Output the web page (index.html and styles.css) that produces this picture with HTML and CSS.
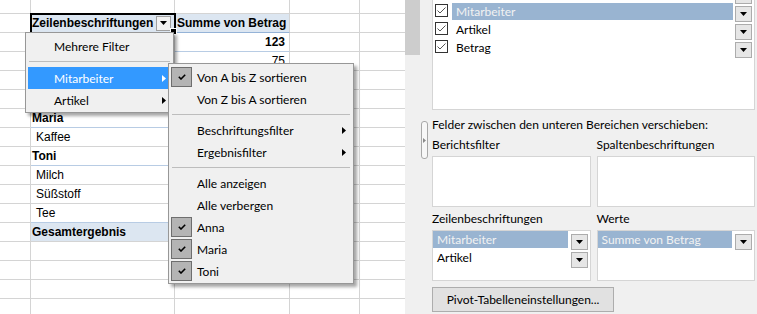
FILE: index.html
```html
<!DOCTYPE html>
<html lang="de">
<head>
    <meta charset="UTF-8">
    <title>PivotTable Filter</title>
    <link rel="stylesheet" href="styles.css">
</head>
<body>
<div class="screen">
    <div class="sheet">
        <div class="row top"><div class="c ca"></div><div class="c cb"></div><div class="c cc"></div><div class="c cd"></div><div class="c ce"></div></div>
        <div class="row">
            <div class="c ca"></div>
            <div class="c cb head sel">Zeilenbeschriftungen
                <span class="dd"><svg width="7" height="4" viewBox="0 0 7 4"><path d="M0 0H7L3.5 4z"/></svg></span>
            </div>
            <div class="c cc head left">Summe von Betrag</div>
            <div class="c cd"></div><div class="c ce"></div>
        </div>
        <!-- rows under the open menus stay empty -->
        <div class="row"><div class="c ca"></div><div class="c cb grp"></div><div class="c cc b grp">123</div><div class="c cd"></div><div class="c ce"></div></div>
        <div class="row"><div class="c ca"></div><div class="c cb"></div><div class="c cc">75</div><div class="c cd"></div><div class="c ce"></div></div>
        <div class="row"><div class="c ca"></div><div class="c cb"></div><div class="c cc"></div><div class="c cd"></div><div class="c ce"></div></div>
        <div class="row"><div class="c ca"></div><div class="c cb"></div><div class="c cc"></div><div class="c cd"></div><div class="c ce"></div></div>
        <div class="row"><div class="c ca"></div><div class="c cb b grp">Maria</div><div class="c cc grp"></div><div class="c cd"></div><div class="c ce"></div></div>
        <div class="row"><div class="c ca"></div><div class="c cb ind">Kaffee</div><div class="c cc"></div><div class="c cd"></div><div class="c ce"></div></div>
        <div class="row"><div class="c ca"></div><div class="c cb b grp">Toni</div><div class="c cc grp"></div><div class="c cd"></div><div class="c ce"></div></div>
        <div class="row"><div class="c ca"></div><div class="c cb ind">Milch</div><div class="c cc"></div><div class="c cd"></div><div class="c ce"></div></div>
        <div class="row"><div class="c ca"></div><div class="c cb ind">Süßstoff</div><div class="c cc"></div><div class="c cd"></div><div class="c ce"></div></div>
        <div class="row"><div class="c ca"></div><div class="c cb ind last">Tee</div><div class="c cc last"></div><div class="c cd"></div><div class="c ce"></div></div>
        <div class="row"><div class="c ca"></div><div class="c cb total">Gesamtergebnis</div><div class="c cc total"></div><div class="c cd"></div><div class="c ce"></div></div>
        <div class="row"><div class="c ca"></div><div class="c cb"></div><div class="c cc"></div><div class="c cd"></div><div class="c ce"></div></div>
        <div class="row"><div class="c ca"></div><div class="c cb"></div><div class="c cc"></div><div class="c cd"></div><div class="c ce"></div></div>
        <div class="row"><div class="c ca"></div><div class="c cb"></div><div class="c cc"></div><div class="c cd"></div><div class="c ce"></div></div>
        <div class="row"><div class="c ca"></div><div class="c cb"></div><div class="c cc"></div><div class="c cd"></div><div class="c ce"></div></div>

        <!-- field dropdown -->
        <div class="menu filter-menu">
            <div class="mi"><span class="gut"></span>Mehrere Filter</div>
            <div class="sep"></div>
            <div class="mi active"><span class="gut"></span>Mitarbeiter
                <svg class="arr" width="4" height="7" viewBox="0 0 4 7"><path d="M0 0L4 3.5L0 7z"/></svg></div>
            <div class="mi"><span class="gut"></span>Artikel
                <svg class="arr" width="4" height="7" viewBox="0 0 4 7"><path d="M0 0L4 3.5L0 7z"/></svg></div>
        </div>

        <!-- Mitarbeiter submenu -->
        <div class="menu sub-menu">
            <div class="mi"><span class="gut"><span class="chk"><svg width="8" height="6" viewBox="0 0 8 6"><path d="M0.8 2.8L3 5L7.2 0.8"/></svg></span></span>Von A bis Z sortieren</div>
            <div class="mi"><span class="gut"></span>Von Z bis A sortieren</div>
            <div class="sep"></div>
            <div class="mi"><span class="gut"></span>Beschriftungsfilter
                <svg class="arr" width="4" height="7" viewBox="0 0 4 7"><path d="M0 0L4 3.5L0 7z"/></svg></div>
            <div class="mi"><span class="gut"></span>Ergebnisfilter
                <svg class="arr" width="4" height="7" viewBox="0 0 4 7"><path d="M0 0L4 3.5L0 7z"/></svg></div>
            <div class="sep"></div>
            <div class="mi"><span class="gut"></span>Alle anzeigen</div>
            <div class="mi"><span class="gut"></span>Alle verbergen</div>
            <div class="mi"><span class="gut"><span class="chk"><svg width="8" height="6" viewBox="0 0 8 6"><path d="M0.8 2.8L3 5L7.2 0.8"/></svg></span></span>Anna</div>
            <div class="mi"><span class="gut"><span class="chk"><svg width="8" height="6" viewBox="0 0 8 6"><path d="M0.8 2.8L3 5L7.2 0.8"/></svg></span></span>Maria</div>
            <div class="mi"><span class="gut"><span class="chk"><svg width="8" height="6" viewBox="0 0 8 6"><path d="M0.8 2.8L3 5L7.2 0.8"/></svg></span></span>Toni</div>
        </div>
    </div>

    <div class="vscroll"><div class="thumb"></div></div>

    <div class="panel">
        <div class="handle-col">
            <div class="handle"><svg width="3" height="5" viewBox="0 0 3 5"><path d="M0 0L3 2.5L0 5z"/></svg></div>
        </div>
        <div class="panel-main">
            <div class="field-list">
                <div class="fl-row">
                    <span class="cbx"></span><span class="fl-name"></span>
                    <span class="btn"><svg width="7" height="4" viewBox="0 0 7 4"><path d="M0 0H7L3.5 4z"/></svg></span>
                </div>
                <div class="fl-row">
                    <span class="cbx"><svg width="11" height="11" viewBox="0 0 11 11"><path d="M1.5 5.5L4 8L9.5 2.5"/></svg></span>
                    <span class="fl-name hl">Mitarbeiter</span>
                    <span class="btn"><svg width="7" height="4" viewBox="0 0 7 4"><path d="M0 0H7L3.5 4z"/></svg></span>
                </div>
                <div class="fl-row">
                    <span class="cbx"><svg width="11" height="11" viewBox="0 0 11 11"><path d="M1.5 5.5L4 8L9.5 2.5"/></svg></span>
                    <span class="fl-name">Artikel</span>
                    <span class="btn"><svg width="7" height="4" viewBox="0 0 7 4"><path d="M0 0H7L3.5 4z"/></svg></span>
                </div>
                <div class="fl-row">
                    <span class="cbx"><svg width="11" height="11" viewBox="0 0 11 11"><path d="M1.5 5.5L4 8L9.5 2.5"/></svg></span>
                    <span class="fl-name">Betrag</span>
                    <span class="btn"><svg width="7" height="4" viewBox="0 0 7 4"><path d="M0 0H7L3.5 4z"/></svg></span>
                </div>
            </div>

            <div class="hint">Felder zwischen den unteren Bereichen verschieben:</div>

            <div class="areas">
                <div class="area">
                    <div class="area-label">Berichtsfilter</div>
                    <div class="drop"></div>
                </div>
                <div class="area">
                    <div class="area-label">Spaltenbeschriftungen</div>
                    <div class="drop"></div>
                </div>
                <div class="area">
                    <div class="area-label">Zeilenbeschriftungen</div>
                    <div class="drop">
                        <div class="d-row">
                            <span class="d-name hl">Mitarbeiter</span>
                            <span class="btn"><svg width="7" height="4" viewBox="0 0 7 4"><path d="M0 0H7L3.5 4z"/></svg></span>
                        </div>
                        <div class="d-row">
                            <span class="d-name">Artikel</span>
                            <span class="btn"><svg width="7" height="4" viewBox="0 0 7 4"><path d="M0 0H7L3.5 4z"/></svg></span>
                        </div>
                    </div>
                </div>
                <div class="area">
                    <div class="area-label">Werte</div>
                    <div class="drop">
                        <div class="d-row">
                            <span class="d-name hl">Summe von Betrag</span>
                            <span class="btn"><svg width="7" height="4" viewBox="0 0 7 4"><path d="M0 0H7L3.5 4z"/></svg></span>
                        </div>
                    </div>
                </div>
            </div>

            <button class="settings" type="button">Pivot-Tabelleneinstellungen...</button>
        </div>
    </div>
</div>
</body>
</html>
```

FILE: styles.css
```css
* {
    box-sizing: border-box;
}
body {
    margin: 0;
    width: 757px;
    height: 314px;
    overflow: hidden;
    background: #f0f0f0;
}
.screen {
    display: flex;
    height: 314px;
}

/* spreadsheet */
.sheet {
    position: relative;
    width: 405px;
    height: 314px;
    overflow: hidden;
    background: #fff;
    font-family: "Liberation Sans", Arial, sans-serif;
    font-size: 12px;
    color: #000;
}
.row {
    display: flex;
    height: 19px;
}
.row.top {
    height: 14px;
}
.c {
    height: 100%;
    display: flex;
    align-items: center;
    padding: 0 2px 0 1px;
    border-right: 1px solid #d4d4d4;
    border-bottom: 1px solid #d4d4d4;
    white-space: nowrap;
}
.ca { width: 31px; }
.cb { width: 144px; }
.cc { width: 115px; justify-content: flex-end; padding-right: 4px; }
.cd { width: 70px; }
.ce { width: 45px; border-right: none; }
.cc.left { justify-content: flex-start; padding-left: 2px; }
.b { font-weight: bold; }
.ind { padding-left: 5px; }
.head {
    background: #dce6f1;
    font-weight: bold;
    border-bottom-color: #95b3d7;
}
.grp, .last { border-bottom-color: #b8cce4; }
.total {
    background: #dce6f1;
    font-weight: bold;
}
.sel {
    position: relative;
    outline: 2px solid #000;
    outline-offset: -1px;
    z-index: 1;
}
.sel::after {
    content: "";
    position: absolute;
    right: -3px;
    bottom: -3px;
    width: 5px;
    height: 5px;
    background: #000;
    border: 1px solid #fff;
}
.dd {
    margin-left: auto;
    margin-right: 1px;
    width: 15px;
    height: 15px;
    border: 1px solid #a0a0a0;
    background: #f2f2f2;
    display: flex;
    align-items: center;
    justify-content: center;
}
.dd svg { fill: #000; }

/* context menus */
.menu {
    position: absolute;
    z-index: 2;
    background: #f0f0f0;
    border: 1px solid #979797;
    box-shadow: 3px 3px 3px rgba(0, 0, 0, 0.35);
    font-family: Lato, "Noto Sans", sans-serif;
    font-size: 12px;
    color: #000;
}
.filter-menu {
    left: 25px;
    top: 32px;
    width: 149px;
    padding: 2px 0 1px;
}
.sub-menu {
    left: 168px;
    top: 63px;
    width: 186px;
    padding: 2px 0 1px;
}
.mi {
    height: 22px;
    margin: 0 4px 0 2px;
    display: flex;
    align-items: center;
    padding-right: 3px;
    white-space: nowrap;
}
.mi.active {
    background: #3399ff;
    color: #fff;
}
.gut {
    width: 26px;
    height: 20px;
    flex: none;
    display: flex;
    align-items: center;
}
.chk {
    width: 21px;
    height: 20px;
    border: 1px solid #6e6e6e;
    background: #b4b4b4;
    display: flex;
    align-items: center;
    justify-content: center;
}
.chk svg {
    fill: none;
    stroke: #000;
    stroke-width: 1.6;
}
.arr {
    margin-left: auto;
    fill: currentColor;
}
.sep {
    height: 9px;
    margin: 0 3px;
    padding-top: 4px;
}
.sep::before {
    content: "";
    display: block;
    border-top: 1px solid #bdbdbd;
}
.filter-menu .sep { height: 10px; }

/* vertical scrollbar */
.vscroll {
    width: 15px;
    background: #f0f0f0;
}
.thumb {
    height: 55px;
    background: #cdcdcd;
}

/* pivot field list */
.panel {
    width: 337px;
    display: flex;
    font-family: Lato, "Noto Sans", sans-serif;
    font-size: 12px;
    color: #000;
}
.handle-col {
    width: 12px;
    padding: 121px 0 0 1px;
}
.handle {
    width: 7px;
    height: 38px;
    border: 1px solid #a8a8a8;
    border-radius: 3px;
    background: #f7f7f7;
    display: flex;
    align-items: center;
    justify-content: center;
}
.handle svg { fill: #8a8a8a; }
.panel-main {
    width: 323px;
}
.field-list {
    margin-top: -16px;
    height: 126px;
    background: #fff;
    border: 1px solid #d5d5d5;
}
.fl-row {
    display: flex;
    align-items: flex-start;
    height: 18px;
}
.cbx {
    width: 13px;
    height: 13px;
    margin: 1px 4px 0 2px;
    border: 1px solid #333;
    background: #fff;
    display: flex;
}
.cbx svg {
    fill: none;
    stroke: #555;
    stroke-width: 1;
}
.fl-name, .d-name {
    flex: 1;
    height: 17px;
    line-height: 17px;
    padding-left: 4px;
    white-space: nowrap;
}
.hl {
    background: #99b4d1;
    color: #f2f2f2;
}
.btn {
    width: 17px;
    height: 16px;
    margin: 3px 2px 0 2px;
    border: 1px solid #acacac;
    background: #e6e6e6;
    display: flex;
    align-items: center;
    justify-content: center;
}
.btn svg { fill: #000; }

.hint {
    margin-top: 7px;
    line-height: 16px;
    white-space: nowrap;
}
.areas {
    display: grid;
    grid-template-columns: 1fr 1fr;
    column-gap: 6px;
}
.area-label {
    margin: 4px 0 3px;
    line-height: 16px;
}
.drop {
    height: 51px;
    background: #fff;
    border: 1px solid #d5d5d5;
}
.d-row {
    display: flex;
    align-items: flex-start;
    height: 18px;
}
.d-row .btn {
    margin-left: 3px;
}
.settings {
    display: block;
    margin-top: 6px;
    width: 182px;
    height: 25px;
    padding: 0;
    border: 1px solid #adadad;
    background: #e1e1e1;
    font-family: Lato, "Noto Sans", sans-serif;
    font-size: 12px;
    color: #000;
}
```
